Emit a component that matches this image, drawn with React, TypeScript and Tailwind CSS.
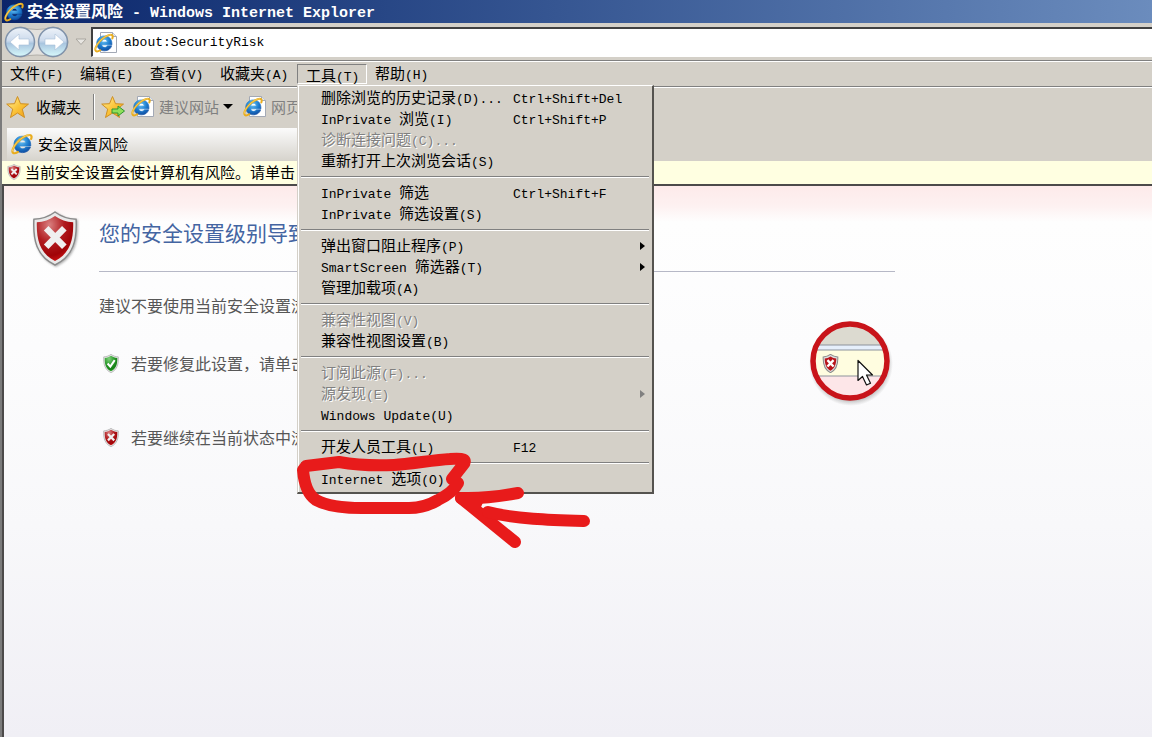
import { useId } from 'react';
import clsx from 'clsx';

type MenuEntry = {
  label: string;
  shortcut?: string;
  disabled?: boolean;
  submenu?: boolean;
};

const menuGroups: MenuEntry[][] = [
  [
    { label: '删除浏览的历史记录(D)...', shortcut: 'Ctrl+Shift+Del' },
    { label: 'InPrivate 浏览(I)', shortcut: 'Ctrl+Shift+P' },
    { label: '诊断连接问题(C)...', disabled: true },
    { label: '重新打开上次浏览会话(S)' },
  ],
  [
    { label: 'InPrivate 筛选', shortcut: 'Ctrl+Shift+F' },
    { label: 'InPrivate 筛选设置(S)' },
  ],
  [
    { label: '弹出窗口阻止程序(P)', submenu: true },
    { label: 'SmartScreen 筛选器(T)', submenu: true },
    { label: '管理加载项(A)' },
  ],
  [
    { label: '兼容性视图(V)', disabled: true },
    { label: '兼容性视图设置(B)' },
  ],
  [
    { label: '订阅此源(F)...', disabled: true },
    { label: '源发现(E)', disabled: true, submenu: true },
    { label: 'Windows Update(U)' },
  ],
  [{ label: '开发人员工具(L)', shortcut: 'F12' }],
  [{ label: 'Internet 选项(O)' }],
];

// Latin runs are set in a monospace face, Chinese runs in the CJK face
function Mixed({ text }: { text: string }) {
  return (
    <>
      {text.split(/([\x20-\x7e]+)/).filter(Boolean).map((run, i) =>
        /^[\x20-\x7e]/.test(run) ? (
          <span key={i} className="font-['Liberation_Mono',monospace] text-[13px] whitespace-pre">
            {run}
          </span>
        ) : (
          <span key={i}>{run}</span>
        )
      )}
    </>
  );
}

function IeLogo({ className }: { className?: string }) {
  const id = useId();
  return (
    <svg viewBox="0 0 24 24" className={className} aria-hidden="true">
      <defs>
        <radialGradient id={id} cx="0.45" cy="0.3" r="0.8">
          <stop offset="0" stopColor="#6cc4f4" />
          <stop offset="0.5" stopColor="#1f7fd0" />
          <stop offset="1" stopColor="#0b3f94" />
        </radialGradient>
      </defs>
      <path
        fillRule="evenodd"
        fill={`url(#${id})`}
        stroke={`url(#${id})`}
        strokeWidth="0.800"
        d="M12.5 3.5c5.4 0 9 3.8 9 9.3v1.4H9.3c.3 2 1.6 3 3.5 3 1.500 0 2.600-.6 3.200-1.800h5.200c-1.200 3.700-4.300 6-8.600 6-5.500 0-9.300-3.700-9.300-9s3.800-8.900 9.200-8.900zM9.400 10.700h6.500c-.2-1.900-1.400-3-3.200-3-1.800 0-3 1.100-3.300 3z"
      />
      <path
        fill="none"
        stroke="#e9ad1e"
        strokeWidth="2.400"
        strokeLinecap="round"
        d="M22 6.500c.9-2.400.4-4.200-1.500-4.300-3.300-.2-9.700 3.300-14.200 8.500-4 4.600-5.900 9.500-4 11 1 .8 3 .3 5.200-1"
      />
      <path
        fill="none"
        stroke="#fbe083"
        strokeWidth="0.700"
        d="M20.500 2.100c-3.300-.2-9.700 3.300-14.200 8.500-3 3.400-4.800 7.200-4.700 9.400"
      />
    </svg>
  );
}

function IePage({ className }: { className?: string }) {
  return (
    <span className={clsx('relative block h-[23px] w-6 shrink-0', className)}>
      <svg viewBox="0 0 24 23" className="absolute inset-0 h-full w-full" aria-hidden="true">
        <path d="M6.500 1.500h12l4 4v16h-16z" fill="#fff" stroke="#a3a9b5" />
        <path d="M18.500 1.500v4h4" fill="#e4e8ee" stroke="#a3a9b5" />
      </svg>
      <IeLogo className="absolute top-0.5 left-0 h-5 w-5" />
    </span>
  );
}

function Star({ arrow }: { arrow?: boolean }) {
  const id = useId();
  return (
    <svg viewBox="0 0 24 24" className="h-6 w-6 shrink-0" aria-hidden="true">
      <defs>
        <linearGradient id={id} x1="0" y1="0" x2="1" y2="1">
          <stop offset="0" stopColor="#fff0a0" />
          <stop offset="0.5" stopColor="#fbc63c" />
          <stop offset="1" stopColor="#f09a14" />
        </linearGradient>
      </defs>
      <path
        d="M11.500 1.500l3 7.200 8 .4-6.200 5 2.200 8.400-7-4.500-7 4.500 2.200-8.400-6-5 7.800-.4z"
        fill={`url(#${id})`}
        stroke="#cf8f22"
        strokeLinejoin="round"
      />
      {arrow && (
        <path
          d="M11 14h6v-3l6.500 5-6.500 5v-3h-6z"
          fill="#8fe05a"
          stroke="#2f9430"
          strokeLinejoin="round"
        />
      )}
    </svg>
  );
}

function Shield({ ok, className }: { ok?: boolean; className?: string }) {
  const id = useId();
  return (
    <svg viewBox="0 0 46 56" className={clsx('shrink-0', className)} aria-hidden="true">
      <defs>
        <radialGradient id={id} cx="0.35" cy="0.2" r="0.9">
          <stop offset="0" stopColor={ok ? '#7fd07a' : '#d98080'} />
          <stop offset="0.45" stopColor={ok ? '#2c9a2c' : '#b01a1e'} />
          <stop offset="0.75" stopColor={ok ? '#168016' : '#a00408'} />
          <stop offset="1" stopColor={ok ? '#3cc03c' : '#e01818'} />
        </radialGradient>
      </defs>
      <path
        d="M23 1c6 4.500 13 7 21.500 7.500C45.500 29 42 46 23 55 4 46 .5 29 1.500 8.500 10 8 17 5.500 23 1z"
        fill="#e9e9e9"
        stroke="#8b8b8b"
        strokeWidth="1.500"
      />
      <path
        d="M23 5c5.500 3.800 11.500 6 18.500 6.500C42 29 38.500 43 23 51 7.500 43 4 29 4.500 11.500 11.500 11 17.500 8.800 23 5z"
        fill={`url(#${id})`}
      />
      {ok ? (
        <path d="M13 28l8 9 13-19" fill="none" stroke="#fff" strokeWidth="6" />
      ) : (
        <path d="M14 17.500l18.500 19M32.500 17.500l-18.500 19" stroke="#f0f0f0" strokeWidth="6.500" />
      )}
    </svg>
  );
}

function NavButtons() {
  const id = useId();
  return (
    <div className="relative flex h-[34px] w-[66px] shrink-0">
      <svg viewBox="0 0 66 34" className="absolute inset-0 h-full w-full" aria-hidden="true">
        <defs>
          <linearGradient id={id} x1="0" y1="0" x2="0" y2="1">
            <stop offset="0" stopColor="#eef3f9" />
            <stop offset="0.45" stopColor="#ccdaec" />
            <stop offset="0.55" stopColor="#a9c5df" />
            <stop offset="1" stopColor="#d8fafc" />
          </linearGradient>
        </defs>
        <path d="M17 2q16 5 32 0a15 15 0 0 1 0 30q-16-4-32 0a15 15 0 0 1 0-30z" fill="#e3e1dd" stroke="#b2afa9" />
        {[16, 49].map((cx) => (
          <circle key={cx} cx={cx} cy="17" r="14.500" fill={`url(#${id})`} stroke="#8093ab" strokeWidth="1.500" />
        ))}
        <path
          d="M6 17l9-8v5h10v6h-10v5zM60 17l-9-8v5h-10v6h10v5z"
          fill="#fff"
          stroke="#a9bfd8"
          strokeWidth="0.600"
          strokeLinejoin="round"
        />
      </svg>
      <button aria-label="后退" className="relative flex-1 rounded-full" />
      <button aria-label="前进" className="relative flex-1 rounded-full" />
    </div>
  );
}

function ToolsMenu() {
  return (
    <div
      role="menu"
      className="absolute top-[21px] left-0 z-20 w-[357px] border-t border-r-2 border-b-2 border-l border-t-white border-r-[#55534f] border-b-[#55534f] border-l-[#d4d0c8] bg-[#d4d0c8] py-0.5 shadow-[inset_1px_0_0_#fff]"
    >
      {menuGroups.map((group, g) => (
        <div key={g}>
          {g > 0 && <div className="mx-[3px] mt-1 mb-[5px] h-0.5 border-t border-b border-t-[#808080] border-b-white" />}
          {group.map((item) => (
            <button
              key={item.label}
              role="menuitem"
              disabled={item.disabled}
              className={clsx(
                'flex h-[21px] w-full items-center pr-[7px] pl-[23px] text-left whitespace-nowrap',
                item.disabled && 'text-[#808080] [text-shadow:1px_1px_0_#fff]'
              )}
            >
              <span className="w-48">
                <Mixed text={item.label} />
              </span>
              {item.shortcut && (
                <span>
                  <Mixed text={item.shortcut} />
                </span>
              )}
              {item.submenu && (
                <svg viewBox="0 0 5 8" className="ml-auto h-2 w-[5px] fill-current" aria-hidden="true">
                  <path d="M0 0l5 4-5 4z" />
                </svg>
              )}
            </button>
          ))}
        </div>
      ))}
      {/* Hand-drawn marker around the last entry */}
      <svg
        viewBox="0 0 310 120"
        className="pointer-events-none absolute top-[354px] -left-2 h-[120px] w-[310px]"
        fill="none"
        stroke="#e81b1b"
        strokeWidth="12"
        strokeLinecap="round"
        strokeLinejoin="round"
        aria-hidden="true"
      >
        <path d="M16 26L49 22C66 25 84 26 104 25C120 24 144 20 160 19Q180 17 173 25L162 39L168 43C164 51 156 56 148 60C138 66 128 68 119 68H72C56 68 37 66 26 60C17 54 14 42 13 30Z" />
        <path d="M228 53C215 55 200 59 171 58L225 102" />
        <path d="M171 58L188 59L185 66Z" />
        <path d="M198 72C225 79 260 80 294 81" />
      </svg>
    </div>
  );
}

function Lens() {
  const id = useId();
  return (
    <svg viewBox="0 0 90 90" className="h-[90px] w-[90px] shrink-0" aria-hidden="true">
      <defs>
        <clipPath id={id}>
          <circle cx="45" cy="45" r="36" />
        </clipPath>
        <radialGradient id={`${id}s`}>
          <stop offset="0.800" stopColor="#777" stopOpacity="0.700" />
          <stop offset="1" stopColor="#999" stopOpacity="0" />
        </radialGradient>
      </defs>
      <circle cx="46" cy="48" r="42" fill={`url(#${id}s)`} />
      <g clipPath={`url(#${id})`}>
        <path d="M0 0h90v29H0z" fill="#dcdad0" />
        <path d="M0 29h90v5H0z" fill="#e6effb" />
        <path d="M0 34h90v26H0z" fill="#fffde0" />
        <path d="M0 60h90v30H0z" fill="#fde6e8" />
        <path d="M0 29h90M0 34h90M0 60h90" stroke="#8d939c" />
      </g>
      <circle cx="45" cy="45" r="37" fill="none" stroke="#c8141a" strokeWidth="5.500" />
      <svg x="17" y="38" width="17" height="19" viewBox="0 0 46 56">
        <path
          d="M23 1c6 4.500 13 7 21.500 7.500C45.500 29 42 46 23 55 4 46 .5 29 1.500 8.500 10 8 17 5.500 23 1z"
          fill="#ddd"
          stroke="#8b8b8b"
          strokeWidth="3"
        />
        <path d="M23 7c5 3.500 11 5.500 17 6C40 29 36 42 23 49 10 42 6 29 6 13c6-.5 12-2.500 17-6z" fill="#b8141a" />
        <path d="M14 18l18 19M32 18l-18 19" stroke="#fff" strokeWidth="7" />
      </svg>
      <path
        d="M53 44.500v20l4.500-4 4 8.500 4-1.800-4-8.200h6z"
        fill="#fff"
        stroke="#111"
        strokeWidth="1.200"
        strokeLinejoin="round"
      />
    </svg>
  );
}

export default function App() {
  return (
    <div className="flex min-h-screen flex-col border-l-2 border-[#7b7b7b] bg-[#d4d0c8] font-['Noto_Sans_CJK_SC',sans-serif] text-[15px] leading-5 text-black">
      {/* Title bar */}
      <header className="flex h-[23px] items-center bg-linear-to-r from-[#0a246a] to-[#6b8cbd] pl-0.5 text-white">
        <IeLogo className="h-5 w-5" />
        <h1 className="ml-[3px] text-base leading-6 font-bold whitespace-pre">
          安全设置风险
          <span className="font-['Liberation_Mono',monospace] text-[15px]"> - Windows Internet Explorer</span>
        </h1>
      </header>

      {/* Address bar */}
      <div className="flex h-[38px] items-center border-b border-[#808080] pl-0.5">
        <NavButtons />
        <button aria-label="最近的页面" className="flex w-[21px] justify-center">
          <svg viewBox="0 0 12 8" className="h-2 w-3" aria-hidden="true">
            <path d="M1 1h10l-5 5.500z" fill="#e8e6e2" stroke="#aaa7a0" />
          </svg>
        </button>
        <label className="flex h-[30px] flex-1 items-center border-t-2 border-b border-l-2 border-t-[#404040] border-b-white border-l-[#404040] bg-white pl-px">
          <IePage />
          <input
            aria-label="地址"
            defaultValue="about:SecurityRisk"
            className="ml-1.5 flex-1 bg-transparent pt-0.5 font-['Liberation_Mono',monospace] text-[13px] outline-none"
          />
        </label>
      </div>

      {/* Menu bar */}
      <nav className="flex h-[26px] items-center border-t border-b border-t-white border-b-[#808080] whitespace-nowrap">
        <button className="w-[70px] pl-2 text-left"><Mixed text="文件(F)" /></button>
        <button className="w-[70px] pl-2 text-left"><Mixed text="编辑(E)" /></button>
        <button className="w-[70px] pl-2 text-left"><Mixed text="查看(V)" /></button>
        <button className="w-[85px] pl-2 text-left"><Mixed text="收藏夹(A)" /></button>
        <div className="relative h-[21px] w-[70px]">
          <button
            aria-expanded="true"
            className="h-5 w-full border border-t-[#808080] border-r-white border-b-white border-l-[#808080] pl-2 text-left leading-5"
          >
            <Mixed text="工具(T)" />
          </button>
          <ToolsMenu />
        </div>
        <button className="pl-2"><Mixed text="帮助(H)" /></button>
      </nav>

      {/* Favorites bar */}
      <div className="flex h-[41px] items-center border-t border-white pb-[3px] pl-1 whitespace-nowrap">
        <button className="flex items-center gap-1.5">
          <Star />
          收藏夹
        </button>
        <div className="mx-1.5 ml-3 h-[26px] w-0.5 border-r border-l border-l-[#808080] border-r-white" />
        <button aria-label="添加到收藏夹栏">
          <Star arrow />
        </button>
        <button className="ml-1.5 flex items-center gap-1 text-[#808080]">
          <IePage />
          建议网站
          <svg viewBox="0 0 10 5" className="h-[5px] w-2.5" aria-hidden="true">
            <path d="M0 0h10l-5 5z" fill="#000" />
          </svg>
        </button>
        <button className="ml-2.5 flex items-center gap-1 text-[#808080]">
          <IePage />
          网页
        </button>
      </div>

      {/* Tab strip */}
      <div className="flex h-[33px] pl-[5px]">
        <button className="flex w-[340px] items-center gap-[5px] bg-linear-to-b from-[#fbfbfb] to-[#d6d3cc] pb-0.5 pl-1">
          <IeLogo className="h-[22px] w-[22px]" />
          安全设置风险
        </button>
      </div>

      {/* Information bar */}
      <div role="alert" className="flex h-[23px] items-center gap-1 bg-[#ffffe1] pb-0.5 pl-[5px] whitespace-nowrap">
        <Shield className="h-4 w-3.5" />
        当前安全设置会使计算机有风险。请单击
      </div>

      {/* Page */}
      <main className="flex flex-1 border-t-2 border-l-2 border-[#4c4a4a] bg-[linear-gradient(to_bottom,#fdeaea_0,#fdf1f1_20px,#fefefe_36px,#fcfcfd_160px,#f8f8fa_340px,#f0eff5_100%)] pt-[25px] pl-7">
        <Shield className="h-[55px] w-[46px] drop-shadow-[1px_1px_1px_rgba(0,0,0,0.3)]" />
        <div className="ml-[21px] max-w-[796px] flex-1 pt-[7px] whitespace-nowrap text-[#575757]">
          <h2 className="border-b border-[#b6b8c6] pb-[25px] text-[21px] leading-7 text-[#4465a2]">
            您的安全设置级别导致
          </h2>
          <div className="flex items-start justify-between text-base leading-6">
            <div className="pt-[21px]">
              <p>建议不要使用当前安全设置浏</p>
              <p className="mt-[34px] flex items-center gap-[11px] pl-[3px]">
                <Shield ok className="h-[19px] w-[18px]" />
                若要修复此设置，请单击
              </p>
              <p className="mt-[50px] flex items-center gap-[11px] pl-[3px]">
                <Shield className="h-[19px] w-[18px]" />
                若要继续在当前状态中浏
              </p>
            </div>
            <div className="pt-11">
              <Lens />
            </div>
          </div>
        </div>
      </main>
    </div>
  );
}
